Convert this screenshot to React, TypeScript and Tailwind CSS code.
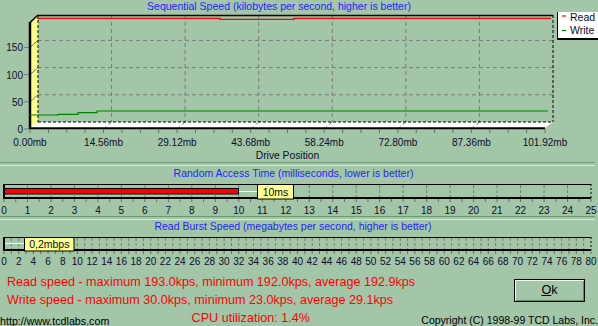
import React from "react";

const ink = "#0c0c2a";
const xLabels = ["0.00mb", "14.56mb", "29.12mb", "43.68mb", "58.24mb", "72.80mb", "87.36mb", "101.92mb"];
const colW = 73.57;

// sequential speed chart, drawn in page coords (viewBox offset)
function SpeedChart() {
  return (
    <svg width={598} height={150} viewBox="0 12 598 150" className="block">
      {/* left wall + floor */}
      <polygon points="38,15 30,22 30,129 38,122" fill="#ffff88" />
      <polygon points="38,122 553,122 545,128 30,128" fill="#ffffff" />

      {/* horizontal grid */}
      {[1, 2, 3].map((j) => {
        const y = 122 - 27.2 * j;
        return (
          <g key={j} stroke="#7a7a7a" strokeWidth={1}>
            <line x1={38} y1={y} x2={553} y2={y} strokeDasharray="4 3" />
            <line x1={38} y1={y} x2={30} y2={y + 7} />
            <line x1={24} y1={y + 7} x2={30} y2={y + 7} />
          </g>
        );
      })}
      <line x1={24} y1={129} x2={30} y2={129} stroke="#7a7a7a" />

      {/* vertical grid */}
      {[1, 2, 3, 4, 5, 6].map((k) => {
        const x = 38 + colW * k;
        return (
          <g key={k} stroke="#7a7a7a" strokeWidth={1} strokeDasharray="4 3">
            <line x1={x} y1={15} x2={x} y2={122} />
            <line x1={x} y1={122} x2={x - 7} y2={128} />
          </g>
        );
      })}

      {/* frame */}
      <line x1={38} y1={15.5} x2={553} y2={15.5} stroke="#000" strokeWidth={1.5} />
      <line x1={553} y1={15} x2={553} y2={122} stroke="#000" strokeDasharray="3 2" />
      <line x1={38} y1={15} x2={38} y2={122} stroke="#000" strokeDasharray="3 2" />
      <line x1={38} y1={122} x2={553} y2={122} stroke="#000" strokeDasharray="3 2" />
      <line x1={38} y1={15} x2={29.5} y2={23} stroke="#000" strokeWidth={1.5} />
      <line x1={30} y1={22} x2={30} y2={129} stroke="#000" strokeWidth={2.5} />
      <line x1={30} y1={128.3} x2={545} y2={128.3} stroke="#000" strokeWidth={2} />
      <line x1={553} y1={122} x2={546} y2={128} stroke="#c8c8c8" />

      {/* x ticks */}
      {Array.from({ length: 29 }, (_, i) => (
        <line key={i} x1={30 + (colW / 4) * i} y1={129.5} x2={30 + (colW / 4) * i} y2={133} stroke="#6a6a6a" />
      ))}

      {/* data */}
      <polyline points="37,18.3 220,18.3 220,19.3 294,19.3 294,18.3 551,18.3" fill="none" stroke="#ff0000" strokeWidth={1.3} />
      <polyline points="30,115 58,115 58,114.3 78,114.3 78,112.7 97,112.7 97,111 548,111" fill="none" stroke="#008000" strokeWidth={1.2} />

      {/* y labels */}
      {[0, 50, 100, 150].map((v, j) => (
        <text key={v} x={23} y={129 - 27.2 * j + 4} fontSize={10} fill={ink} textAnchor="end">
          {v}
        </text>
      ))}

      {/* x labels */}
      {xLabels.map((t, k) => (
        <text key={t} x={30 + colW * k} y={146} fontSize={10} fill={ink} textAnchor="middle">
          {t}
        </text>
      ))}
      <text x={287.5} y={158.7} fontSize={10.3} fill={ink} textAnchor="middle">
        Drive Position
      </text>

      {/* legend */}
      <rect x={557.5} y={7.5} width={45} height={31} fill="#ffffff" stroke="#000" />
      <line x1={557} y1={39.5} x2={598} y2={39.5} stroke="#000" />
      <line x1={562} y1={16} x2={566} y2={16} stroke="#ff0000" strokeWidth={1.2} />
      <line x1={562} y1={30.5} x2={566} y2={30.5} stroke="#008000" strokeWidth={1.2} />
      <text x={570} y={20.5} fontSize={10.5} fill={ink}>Read</text>
      <text x={570} y={34} fontSize={10.5} fill={ink}>Write</text>
    </svg>
  );
}

type GaugeProps = {
  top: number;
  height: number;
  max: number;
  labelStep: number;
  tickStep: number;
  boxTop: number;
  boxBottom: number;
  labelY: number;
  children?: React.ReactNode;
};

function Gauge({ top, height, max, labelStep, tickStep, boxTop, boxBottom, labelY, children }: GaugeProps) {
  const x0 = 4;
  const x1 = 591;
  const unit = (x1 - x0) / max;
  const labels = Array.from({ length: max / labelStep + 1 }, (_, i) => i * labelStep);
  const ticks = Array.from({ length: max / tickStep + 1 }, (_, i) => i * tickStep);

  return (
    <svg width={598} height={height} viewBox={`0 ${top} 598 ${height}`} className="block">
      {Array.from({ length: max - 1 }, (_, i) => (
        <line key={i} x1={x0 + unit * (i + 1)} y1={boxTop + 1} x2={x0 + unit * (i + 1)} y2={boxBottom - 1} stroke="#7a7a7a" strokeDasharray="3 2" />
      ))}
      {ticks.map((t) => (
        <line key={t} x1={x0 + unit * t} y1={boxBottom + 1} x2={x0 + unit * t} y2={boxBottom + 4} stroke="#6a6a6a" />
      ))}
      {labels.map((v) => (
        <text key={v} x={x0 + unit * v} y={labelY} fontSize={10} fill={ink} textAnchor="middle">
          {v}
        </text>
      ))}
      <line x1={3} y1={boxTop + 0.5} x2={x1} y2={boxTop + 0.5} stroke="#000" />
      <line x1={3} y1={boxBottom} x2={x1} y2={boxBottom} stroke="#000" strokeWidth={2} />
      <line x1={4} y1={boxTop} x2={4} y2={boxBottom + 1} stroke="#000" strokeWidth={2} />
      <line x1={x1} y1={boxTop} x2={x1} y2={boxBottom} stroke="#000" strokeDasharray="2 2" />
      {children}
    </svg>
  );
}

function Rule() {
  return (
    <div className="flex flex-col pr-[3px]">
      <div className="h-px bg-[#6c9872]" />
      <div className="h-[2px]" />
      <div className="h-px bg-[#d6eada]" />
    </div>
  );
}

export default function App() {
  return (
    <div className="w-[598px] h-[326px] overflow-hidden bg-[#a3c6a8] font-['Liberation_Sans',Arial,sans-serif]">
      <section className="h-[162px]">
        <h1 className="h-[12px] leading-[12px] text-[10.5px] text-[#2424ff] text-center pr-[40px] whitespace-nowrap">
          Sequential Speed (kilobytes per second, higher is better)
        </h1>
        <SpeedChart />
      </section>
      <Rule />

      <section className="h-[50px] pt-px">
        <h2 className="h-[12px] leading-[12px] text-[10.5px] text-[#2424ff] text-center pr-[11px] whitespace-nowrap">
          Random Access Time (milliseconds, lower is better)
        </h2>
        <Gauge top={179} height={37} max={25} labelStep={1} tickStep={0.5} boxTop={184} boxBottom={198} labelY={213.5}>
          <rect x={4.5} y={188.5} width={234} height={5.5} fill="#ff0000" stroke="#000" />
          <line x1={239} y1={191.5} x2={257} y2={191.5} stroke="#ffffff" />
          <rect x={257.5} y={184.5} width={36} height={14.5} fill="#ffff90" stroke="#000" />
          <text x={275.5} y={195.8} fontSize={10.5} fill={ink} textAnchor="middle">10ms</text>
        </Gauge>
      </section>
      <Rule />

      <section className="h-[48px]">
        <h2 className="h-[12px] leading-[12px] text-[10.5px] text-[#2424ff] text-center pr-[12px] whitespace-nowrap">
          Read Burst Speed (megabytes per second, higher is better)
        </h2>
        <Gauge top={232} height={36} max={80} labelStep={2} tickStep={1} boxTop={237} boxBottom={250} labelY={265}>
          <line x1={5} y1={243.5} x2={24} y2={243.5} stroke="#ffffff" />
          <rect x={24.5} y={237.5} width={49.5} height={13.5} fill="#ffff90" stroke="#000" />
          <text x={49.3} y={248.3} fontSize={10.5} fill={ink} textAnchor="middle">0,2mbps</text>
        </Gauge>
      </section>

      <section className="h-[58px] pt-[4.5px] text-[12.6px] leading-[18px] whitespace-nowrap">
        <div className="flex">
          <div className="flex flex-col pl-[7px] text-[#ff0000]">
            <p>Read speed - maximum 193.0kps, minimum 192.0kps, average 192.9kps</p>
            <p>Write speed - maximum 30.0kps, minimum 23.0kps, average 29.1kps</p>
          </div>
          <button className="ml-auto mr-[13px] mt-[6.5px] w-[71px] h-[23px] border border-black bg-[#a3c6a8] shadow-[inset_1px_1px_0_#eef6ee,inset_-1px_-1px_0_#5f8a66] text-[12.6px] leading-none text-black">
            <span className="underline">O</span>k
          </button>
        </div>
        <div className="flex items-start">
          <span className="w-[196px] mt-[6.7px] text-[10.7px] leading-[13px] text-black">http://www.tcdlabs.com</span>
          <span className="w-[235px] text-[#ff0000]">CPU utilization: 1.4%</span>
          <span className="mt-[5px] text-[10.5px] leading-[13px] text-black">Copyright (C) 1998-99 TCD Labs, Inc.</span>
        </div>
      </section>
    </div>
  );
}
